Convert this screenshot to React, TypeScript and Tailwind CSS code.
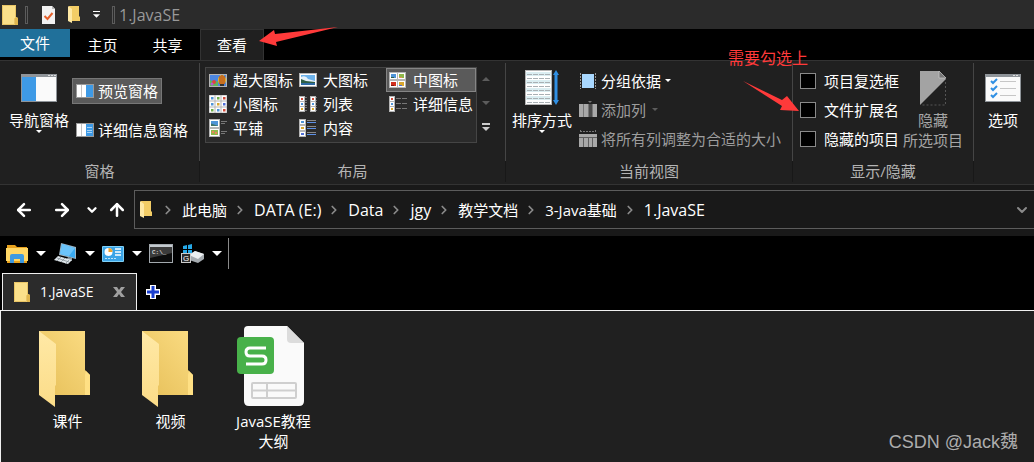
import type { ReactNode } from "react"
import { ArrowLeft, ArrowRight, ArrowUp, ChevronDown, ChevronRight } from "lucide-react"
import clsx from "clsx"

const crumbs = [
  { name: "此电脑" },
  { name: "DATA (E:)", latin: true },
  { name: "Data", latin: true },
  { name: "jgy", latin: true },
  { name: "教学文档" },
  { name: "3-Java基础" },
  { name: "1.JavaSE", latin: true },
]

const Caret = ({ className }: { className?: string }) => (
  <svg viewBox="0 0 8 4" className={clsx("shrink-0", className)} aria-hidden="true">
    <path d="M0 0h8L4 4z" fill="currentColor" />
  </svg>
)

const SmallFolder = ({ className }: { className?: string }) => (
  <svg viewBox="0 0 12 17" className={className} aria-hidden="true">
    <path d="M1 0h10v10l1 1v4H1z" fill="#f3cd66" />
    <path d="M0 0l4 3v14l-4-2z" fill="#ffe9a5" />
  </svg>
)

const ClosedFolder = ({ className }: { className?: string }) => (
  <svg viewBox="0 0 18 20" className={className} aria-hidden="true">
    <path d="M1 0h14v12l2 1v7H1z" fill="#fbe08a" />
    <path d="M15 12l-1 1v7h3v-7z" fill="#e0b64e" />
    <path d="M1.500 .5h13v12l-1 1v6h-12z" fill="none" stroke="#e9c566" />
  </svg>
)

/* Small landscape picture used by the layout icons */
const Photo = ({ x, y, w, h, tone = "#4f94d8" }: { x: number; y: number; w: number; h: number; tone?: string }) => (
  <g>
    <rect x={x + 0.5} y={y + 0.5} width={w - 1} height={h - 1} fill="#fff" stroke="#b5b5b5" />
    <rect x={x + 2} y={y + 2} width={w - 4} height={h - 4} fill={tone} />
    <path d={`M${x + 2} ${y + h / 2}l${w - 4} ${h / 4}V${y + h - 2}H${x + 2}z`} fill="#3d6b4f" opacity=".8" />
  </g>
)

const tones = ["#4f94d8", "#6fae4a", "#d24a3a", "#4f94d8", "#d9a72f", "#4f6fd8", "#6fae4a", "#4f94d8", "#d24a3a"]

const layoutIcons: Record<string, ReactNode> = {
  xl: (
    <g>
      <rect x=".5" y="3.500" width="17" height="12" fill="#4c86e0" stroke="#b5b5b5" />
      <path d="M1 9l4 2 4-1v5H1z" fill="#5db85a" />
      <circle cx="5" cy="11" r="2" fill="#e0463c" />
      <circle cx="3" cy="13" r="1.500" fill="#b75ad0" />
      <ellipse cx="13" cy="9" rx="4" ry="5" fill="#e8b720" />
      <path d="M11 5v8M13 4v10M15 5v8" stroke="#a8281f" />
      <path d="M11 14h4" stroke="#333" strokeWidth="2" />
    </g>
  ),
  large: (
    <g>
      <rect x=".5" y="2.500" width="17" height="13" fill="#fff" stroke="#b5b5b5" />
      <rect x="2" y="4" width="14" height="10" fill="#6db3ec" />
      <path d="M2 6q5-2 7 2l7 2v1H2z" fill="#e6f2fb" />
      <path d="M2 8l5 2 9 1v1H2z" fill="#2f5f46" />
      <path d="M2 12h14v2H2z" fill="#2f6ba5" />
    </g>
  ),
  medium: (
    <g>
      {[0, 1, 2, 3].map((i) => (
        <g key={i}>
          <rect x={(i % 2) * 8 + 0.5} y={Math.floor(i / 2) * 8 + 1.5} width="8" height="7" fill="#fff" stroke="#b5b5b5" />
          <rect x={(i % 2) * 8 + 2} y={Math.floor(i / 2) * 8 + 3} width="5" height="4" fill={["#4f94d8", "#8fb84a", "#d2301f", "#d9a72f"][i]} />
          <path d={`M${(i % 2) * 8 + 2} ${Math.floor(i / 2) * 8 + 6.5}h3`} stroke={["#2f5f46", "#e88a5a", "#7d1a10", "#4f6fd8"][i]} />
        </g>
      ))}
    </g>
  ),
  small: (
    <g>
      <rect width="18" height="18" fill="#b5b5b5" />
      {tones.map((tone, i) => (
        <g key={i}>
          <rect x={(i % 3) * 6 + 0.5} y={Math.floor(i / 3) * 6 + 0.5} width="5" height="5" fill="#fff" />
          <rect x={(i % 3) * 6 + 2} y={Math.floor(i / 3) * 6 + 2} width="2.500" height="2.500" fill={tone} />
        </g>
      ))}
    </g>
  ),
  list: (
    <g>
      {[0, 11].map((x) =>
        [0, 1, 2].map((i) => (
          <g key={`${x}-${i}`}>
            <rect x={x + 0.5} y={i * 5 + 1.5} width="5" height="5" fill="#fff" stroke="#b5b5b5" />
            <rect x={x + 2} y={i * 5 + 3} width="2" height="2" fill={tones[i + 2]} />
            <path d={`M${x + 6} ${i * 5 + 2.5}h2M${x + 6} ${i * 5 + 5.5}h2`} stroke="#777" />
          </g>
        ))
      )}
    </g>
  ),
  details: (
    <g>
      {[0, 1, 2].map((i) => (
        <g key={i}>
          <rect x=".5" y={i * 5 + 1.5} width="5" height="5" fill="#fff" stroke="#b5b5b5" />
          <rect x="2" y={i * 5 + 3} width="2" height="2" fill={tones[i + 2]} />
          <path d={`M7 ${i * 5 + 3.5}h5M13 ${i * 5 + 3.5}h5`} stroke="#777" />
        </g>
      ))}
    </g>
  ),
  tiles: (
    <g>
      <Photo x={0} y={0} w={11} h={9} />
      <rect x=".5" y="9.500" width="10" height="8" fill="#fff" stroke="#b5b5b5" />
      <rect x="2" y="11" width="7" height="5" fill="#8fb84a" />
      <path d="M3 13h2M6 14h2" stroke="#e88a5a" strokeWidth="2" />
      <path d="M12 2.500h6M12 4.500h4M12 12.500h6M12 14.500h4" stroke="#777" />
    </g>
  ),
  content: (
    <g>
      {[0, 1, 2].map((i) => (
        <g key={i}>
          <rect x=".5" y={i * 6 + 0.5} width="6" height="5" fill="#fff" stroke="#b5b5b5" />
          <rect x="2" y={i * 6 + 2} width="3" height="2" fill={tones[i + 3]} />
          <path d={`M8 ${i * 6 + 1.5}h9`} stroke="#888" />
          <path d={`M8 ${i * 6 + 3.5}h9`} stroke="#5c8fe6" />
        </g>
      ))}
    </g>
  ),
}

const layouts = [
  { id: "xl", label: "超大图标" },
  { id: "large", label: "大图标" },
  { id: "medium", label: "中图标" },
  { id: "small", label: "小图标" },
  { id: "list", label: "列表" },
  { id: "details", label: "详细信息" },
  { id: "tiles", label: "平铺" },
  { id: "content", label: "内容" },
]

const PaneIcon = ({ details }: { details?: boolean }) => (
  <svg viewBox="0 0 18 14" className="h-[14px] w-[18px] shrink-0" aria-hidden="true">
    <rect x=".5" y=".5" width="17" height="13" fill="#fff" stroke="#9a9a9a" />
    <path d="M5.500 1v12" stroke="#c4c4c4" />
    <rect x="10" y="1" width="7" height="12" fill="#3e9ae6" />
    {details && <path d="M11 4.500h5M11 7.500h5M11 9.500h5" stroke="#a8d4f8" />}
  </svg>
)

const Group = ({ label, className, children }: { label?: string; className: string; children: ReactNode }) => (
  <section className={clsx("flex flex-col pt-0.5", className)}>
    <div className="flex h-[98px] items-start border-r border-[#454545] pt-[3px]">{children}</div>
    <div className="h-[21px] border-r border-[#181818] text-center leading-5 text-[#b4b4b4]">{label}</div>
  </section>
)

interface BigButtonProps {
  icon: ReactNode
  lines: string[]
  caret?: boolean
  disabled?: boolean
}

const BigButton = ({ icon, lines, caret, disabled }: BigButtonProps) => (
  <button disabled={disabled} className={clsx("flex shrink-0 flex-col items-center", disabled && "text-[#a6a6a6]")}>
    <span className="flex h-[44px] items-center">{icon}</span>
    {lines.map((line) => (
      <span key={line} className="leading-5">{line}</span>
    ))}
    {caret && <Caret className="h-[3px] w-[6px]" />}
  </button>
)

const CheckRow = ({ id, label }: { id: string; label: string }) => (
  <div className="flex h-[29px] items-center gap-2">
    <input id={id} type="checkbox" className="size-4 shrink-0 appearance-none border border-[#8a8a8a] bg-black checked:bg-[#3e9ae6]" />
    <label htmlFor={id} className="whitespace-nowrap">{label}</label>
  </div>
)

const TitleBar = () => (
  <header className="flex h-[29px] items-center bg-[#2b2b2b] pl-px">
    <ClosedFolder className="h-5 w-[18px]" />
    <span className="ml-[6px] h-[18px] w-[3px] border border-[#5c5c5c]" />
    <button aria-label="属性" className="ml-[14px]">
      <svg viewBox="0 0 13 18" className="h-[18px] w-[13px]" aria-hidden="true">
        <path d="M0 0h10l3 3v15H0z" fill="#f2f2f2" />
        <path d="M10 0v3h3z" fill="#b9b9b9" />
        <path d="M2.500 10l3 3 5-6" fill="none" stroke="#e4602c" strokeWidth="2" />
      </svg>
    </button>
    <button aria-label="新建文件夹" className="ml-[13px]"><SmallFolder className="h-[17px] w-3" /></button>
    <button aria-label="自定义快速访问工具栏" className="ml-[13px] flex flex-col items-center gap-0.5 text-white">
      <span className="h-px w-[7px] bg-white" />
      <Caret className="h-1 w-[7px]" />
    </button>
    <span className="ml-3 h-[18px] w-[3px] border border-[#5c5c5c]" />
    <h1 className="ml-1 text-base leading-5 text-[#999]">1.JavaSE</h1>
  </header>
)

const RibbonTabs = () => (
  <nav className="flex h-[31px] bg-black">
    <button className="h-7 w-[70px] bg-[#20709a]">文件</button>
    <button className="w-[65px]">主页</button>
    <button className="w-[65px]">共享</button>
    <button className="w-16 border-x border-t border-[#333] bg-[#202020]">查看</button>
  </nav>
)

const Ribbon = () => (
  <div className="flex h-[125px] border-y border-[#333] bg-[#202020]">
    <Group label="窗格" className="w-[200px] shrink-0">
      <div className="flex gap-[3px] pl-[9px]">
        <BigButton
          lines={["导航窗格"]}
          caret
          icon={
            <svg viewBox="0 0 36 28" className="h-7 w-9" aria-hidden="true">
              <rect width="36" height="28" fill="#8f9499" />
              <rect x="1" y="3" width="34" height="24" fill="#fafafa" />
              <rect x="1" y="3" width="14" height="24" fill="#3e9ae6" />
              <path d="M27 1.500h2M30 1.500h2M33 1.500h2" stroke="#ddd" />
            </svg>
          }
        />
        <div className="flex flex-col items-start gap-[13px] pt-3">
          <button className="flex h-[26px] items-center gap-1 border border-[#777] bg-[#5a5a5a] px-[3px]"><PaneIcon />预览窗格</button>
          <button className="flex h-[26px] items-center gap-1 border border-transparent px-[3px]"><PaneIcon details />详细信息窗格</button>
        </div>
      </div>
    </Group>

    <Group label="布局" className="w-[306px] shrink-0">
      <div className="ml-[5px] mt-px flex">
        <div className="grid h-[76px] grid-cols-[90px_90px_90px] grid-rows-[24px_24px_24px] border border-[#454545] bg-[#2b2b2b]">
          {layouts.map(({ id, label }) => (
            <button
              key={id}
              className={clsx(
                "flex items-center gap-[6px] whitespace-nowrap border px-0.5",
                id === "medium" ? "border-[#858585] bg-[#5a5a5a]" : "border-transparent"
              )}
            >
              <svg viewBox="0 0 18 18" className="size-[18px] shrink-0" aria-hidden="true">{layoutIcons[id]}</svg>
              {label}
            </button>
          ))}
        </div>
        <div className="flex w-[18px] flex-col text-[#5c5c5c]">
          <button aria-label="向上" className="flex h-6 items-center justify-center"><Caret className="h-1 w-2 rotate-180" /></button>
          <button aria-label="向下" className="flex h-6 items-center justify-center"><Caret className="h-1 w-2" /></button>
          <button aria-label="更多" className="flex h-6 flex-col items-center justify-center gap-0.5 text-[#ccc]">
            <span className="h-0.5 w-2 bg-[#ccc]" />
            <Caret className="h-1 w-2" />
          </button>
        </div>
      </div>
    </Group>

    <Group label="当前视图" className="w-[287px] shrink-0">
      <div className="flex gap-[7px] pl-[6px]">
        <BigButton
          lines={["排序方式"]}
          caret
          icon={
            <svg viewBox="0 0 34 36" className="h-9 w-[34px]" aria-hidden="true">
              <rect x=".5" y=".5" width="26" height="34" fill="#fff" stroke="#b5b5b5" />
              {[2, 10, 18, 26].map((y) => (
                <rect key={y} x="1" y={y} width="25" height="4" fill="#dbeef2" />
              ))}
              <path
                d="M2 4.500h23M2 8.500h23M2 12.500h23M2 16.500h23M2 20.500h23M2 24.500h23M2 28.500h23M2 32.500h23"
                stroke="#a9b0b4"
                strokeDasharray="5 1"
              />
              <path d="M31 3v29" stroke="#2f8fe3" strokeWidth="3" />
              <path d="M28 5l3-5 3 5zM28 30l3 5 3-5z" fill="#2f8fe3" />
            </svg>
          }
        />
        <div className="flex flex-col items-start">
          <button className="flex h-[29px] items-center gap-1">
            <svg viewBox="0 0 18 18" className="size-[18px]" aria-hidden="true">
              <path d="M1.500 1v16M16.500 1v16" stroke="#999" strokeDasharray="2 1" />
              <rect x="3" y="2" width="12" height="14" fill="#a9d8ff" />
            </svg>
            分组依据<Caret className="h-[3px] w-[6px]" />
          </button>
          <button disabled className="flex h-[29px] items-center gap-1 text-[#9d9d9d]">
            <svg viewBox="0 0 18 18" className="size-[18px]" aria-hidden="true">
              <path d="M9 0h4l-2 2z" fill="#777" />
              <rect y="3" width="18" height="13" fill="#a8a8a8" />
              <rect x="9" y="3" width="4" height="13" fill="#4c4c4c" />
              <path d="M4.500 3v13M9.500 3v13M13.500 3v13" stroke="#777" />
            </svg>
            添加列<Caret className="ml-0.5 h-[3px] w-[6px] text-[#5c5c5c]" />
          </button>
          <button disabled className="flex h-[29px] items-center gap-1 whitespace-nowrap text-[#9d9d9d]">
            <svg viewBox="0 0 18 18" className="size-[18px]" aria-hidden="true">
              <path d="M1 1.500h16M1.500 0v3M16.500 0v3" stroke="#777" strokeDasharray="2 1" />
              <rect y="4" width="18" height="13" fill="#a8a8a8" />
              <path d="M0 7.500h18M4.500 8v9M9.500 8v9M13.500 8v9" stroke="#606060" />
            </svg>
            将所有列调整为合适的大小
          </button>
        </div>
      </div>
    </Group>

    <Group label="显示/隐藏" className="w-[181px] shrink-0">
      <div className="flex gap-1 pl-[7px]">
        <div className="flex flex-col">
          <CheckRow id="item-boxes" label="项目复选框" />
          <CheckRow id="file-ext" label="文件扩展名" />
          <CheckRow id="hidden-items" label="隐藏的项目" />
        </div>
        <BigButton
          disabled
          lines={["隐藏", "所选项目"]}
          icon={
            <svg viewBox="0 0 28 36" className="h-9 w-7" aria-hidden="true">
              <path d="M1 1h19l7 8L1 35z" fill="#a3a3a3" />
              <path d="M20 1v7h7z" fill="#777" stroke="#c8c8c8" strokeWidth=".7" />
              <path d="M26.500 12v23H3" fill="none" stroke="#555" strokeDasharray="2 2" />
            </svg>
          }
        />
      </div>
    </Group>

    <section className="flex flex-1 items-start pl-[11px] pt-[5px]">
      <BigButton
        lines={["选项"]}
        icon={
          <svg viewBox="0 0 36 28" className="h-7 w-9" aria-hidden="true">
            <rect width="36" height="28" fill="#8f9499" />
            <rect x="1" y="3" width="34" height="24" fill="#fafafa" />
            <path d="M28 1.500h2M31 1.500h2" stroke="#ddd" />
            <path d="M6 7l2 2 4-4M6 14l2 2 4-4M6 21l2 2 4-4" fill="none" stroke="#2f8fe3" strokeWidth="2" />
            <path d="M15 7.500h16M15 14.500h16M15 21.500h16" stroke="#c6c6c6" />
          </svg>
        }
      />
    </section>
  </div>
)

const AddressBar = () => (
  <div className="flex h-[51px] items-center bg-[#191919] pb-0.5 pl-[14px]">
    <button aria-label="后退"><ArrowLeft className="size-5" strokeWidth={3} /></button>
    <button aria-label="前进" className="ml-[18px]"><ArrowRight className="size-5" strokeWidth={3} /></button>
    <button aria-label="最近位置" className="ml-[13px]"><ChevronDown className="size-[14px]" strokeWidth={4} /></button>
    <button aria-label="向上" className="ml-2"><ArrowUp className="size-5" strokeWidth={3} /></button>
    <div className="ml-[7px] flex h-[39px] flex-1 items-center border-y border-l border-[#5c5c5c] pl-[5px]">
      <SmallFolder className="h-[17px] w-3" />
      <ol className="flex flex-1 items-center pl-[3px]">
        {crumbs.map(({ name, latin }) => (
          <li key={name} className="flex items-center">
            <ChevronRight className="ml-[6px] mr-[7px] size-[14px] text-[#8a8a8a]" strokeWidth={3} />
            <button className={clsx("whitespace-nowrap", latin && "text-base leading-5")}>{name}</button>
          </li>
        ))}
      </ol>
      <button aria-label="历史记录" className="mr-1 text-[#8a8a8a]"><ChevronDown className="size-4" strokeWidth={3} /></button>
    </div>
  </div>
)

const Toolbar = () => (
  <div className="flex h-[35px] items-center bg-black pl-[6px]">
    <button aria-label="文件夹" className="flex items-center gap-2">
      <svg viewBox="0 0 22 20" className="h-5 w-[22px]" aria-hidden="true">
        <path d="M1 1h8l2 2h10v16H1z" fill="#e9a21d" />
        <path d="M0 4h22v13H0z" fill="#ffd766" />
        <path d="M4 19v-7q0-2 2-2h10q2 0 2 2v7h-4v-4H8v4z" fill="#3f9ae0" />
      </svg>
      <Caret className="h-[5px] w-[10px]" />
    </button>
    <button aria-label="此电脑" className="ml-2 flex items-center gap-2">
      <svg viewBox="0 0 23 22" className="h-[22px] w-[23px]" aria-hidden="true">
        <path d="M7 0l15 4v12L5 12z" fill="#9fb4c2" />
        <path d="M8 1l13 4v10L6 11z" fill="#39aaf2" />
        <path d="M8 1l13 4-6 8-9-2z" fill="#6cc4fa" />
        <path d="M14 14l4 1v3l-5-2z" fill="#8b979e" />
        <path d="M4 13l14 4-4 4-14-4z" fill="#dfe6ea" />
        <path d="M3 15l12 4M7 14l-4 4M11 15l-4 4M15 17l-4 4" stroke="#7d8890" strokeWidth=".7" />
      </svg>
      <Caret className="h-[5px] w-[10px]" />
    </button>
    <button aria-label="控制面板" className="ml-[7px] flex items-center gap-2">
      <svg viewBox="0 0 22 16" className="h-4 w-[22px]" aria-hidden="true">
        <rect width="22" height="16" rx="1" fill="#7fd0f7" />
        <rect x="1" y="1" width="20" height="14" fill="#3ba4e6" />
        <circle cx="6.500" cy="6" r="4" fill="#fff" />
        <path d="M6.500 6V2a4 4 0 0 1 4 4z" fill="#f0a229" />
        <path d="M13 3h6M13 6h6M13 9h6" stroke="#fff" strokeWidth="1.500" />
        <path d="M3 12.500h12" stroke="#bfe6fa" strokeDasharray="2 1" />
      </svg>
      <Caret className="h-[5px] w-[10px]" />
    </button>
    <button aria-label="命令提示符" className="ml-[7px]">
      <svg viewBox="0 0 24 19" className="h-[19px] w-6" aria-hidden="true">
        <rect x=".5" y=".5" width="23" height="18" fill="#0c0c0c" stroke="#a3a9ae" />
        <path d="M1 1h22v2H1z" fill="#c3c9ce" />
        <path d="M1 3h22v6L1 14z" fill="#3b3b3b" />
        <text x="3" y="10" fontSize="6" fontFamily="Liberation Mono, monospace" fill="#fff">C:\_</text>
      </svg>
    </button>
    <button aria-label="磁盘" className="ml-2 flex items-center gap-2">
      <svg viewBox="0 0 23 20" className="h-5 w-[23px]" aria-hidden="true">
        <path d="M2 2l4-1v4H2zM7 1l4-1v5H7zM2 6h4v4l-4-1zM7 6h4v4H7z" fill="#26a9e8" />
        <path d="M8 11l6-4 9 3v5l-6 4-9-3z" fill="#a5abb0" />
        <path d="M8 11l6-4 9 3-6 5z" fill="#eceff1" />
        <rect x=".5" y="9.500" width="9" height="9" fill="#2b2b2b" stroke="#ccc" />
        <text x="2" y="17" fontSize="8" fontFamily="Liberation Sans, sans-serif" fill="#fff">G</text>
      </svg>
      <Caret className="h-[5px] w-[10px]" />
    </button>
    <span className="ml-[6px] h-[31px] w-px bg-[#8a8a8a]" />
  </div>
)

const FolderTabs = () => (
  <div className="flex h-[39px] items-end border-b border-[#f0f0f0] bg-black pl-0.5">
    <div className="flex h-[37px] w-[135px] items-center border-x border-t border-[#f0f0f0] bg-[#2b2b2b] pl-[10px]">
      <ClosedFolder className="h-5 w-[18px]" />
      <button className="ml-[9px] text-sm leading-5">1.JavaSE</button>
      <button aria-label="关闭" className="ml-auto mr-[11px]">
        <svg viewBox="0 0 12 10" className="h-[10px] w-3" aria-hidden="true">
          <path d="M0 0h4l2 3 2-3h4L8 5l4 5H8L6 7l-2 3H0l4-5z" fill="#a0a0a0" />
        </svg>
      </button>
    </div>
    <button aria-label="新标签" className="mb-[10px] ml-2">
      <svg viewBox="0 0 16 16" className="size-4" aria-hidden="true">
        <path d="M5 1h6v4h4v6h-4v4H5v-4H1V5h4z" fill="#fff" />
        <path d="M8 2v12M2 8h12" stroke="#1a3fd0" strokeWidth="3" />
      </svg>
    </button>
  </div>
)

const FolderArt = () => (
  <svg viewBox="0 0 80 84" className="h-[84px] w-20" aria-hidden="true">
    <defs>
      <linearGradient id="folder-back" x1="0" y1="1" x2="1" y2="0">
        <stop offset="0" stopColor="#e6bf58" />
        <stop offset="1" stopColor="#fbdc83" />
      </linearGradient>
      <linearGradient id="folder-front" x1="0" y1="0" x2="0" y2="1">
        <stop offset="0" stopColor="#ffe9a6" />
        <stop offset="1" stopColor="#fbdc88" />
      </linearGradient>
    </defs>
    <path d="M11 7h46v39l5 5v20H11z" fill="url(#folder-back)" />
    <path d="M58 47l4 4v20h-5V51z" fill="#ffe084" />
    <path d="M11 7l17 13v41l-1 1v21L11 71z" fill="url(#folder-front)" />
  </svg>
)

const SheetArt = () => (
  <svg viewBox="0 0 80 84" className="h-[84px] w-20" aria-hidden="true">
    <path d="M14 2h39l17 17v58q0 5-5 5H15q-5 0-5-5V6q0-4 4-4z" fill="#fafafa" />
    <path d="M53 2l17 17H57q-4 0-4-4z" fill="#dcdcdc" />
    <rect x="3" y="13" width="37" height="37" rx="4" fill="#48b14a" />
    <path d="M32 24H16q-4 0-4 4t4 4h12q4 0 4 4t-4 4H12" fill="none" stroke="#fff" strokeWidth="3" />
    <g fill="none" stroke="#cfcfcf" strokeWidth="2">
      <rect x="18" y="59" width="44" height="15" rx="1" />
      <path d="M18 66.500h44M33 59v15" />
    </g>
  </svg>
)

const files = [
  { name: "课件", art: <FolderArt /> },
  { name: "视频", art: <FolderArt /> },
  { name: "JavaSE教程大纲", art: <SheetArt /> },
]

export default function App() {
  return (
    <div className="relative flex min-h-screen flex-col overflow-hidden bg-[#202020] font-['Open_Sans','Noto_Sans_CJK_SC',sans-serif] text-[15px] leading-5 text-white">
      <TitleBar />
      <RibbonTabs />
      <Ribbon />
      <AddressBar />
      <Toolbar />
      <div className="h-px bg-black" />
      <FolderTabs />

      <main className="flex-1 border-l border-[#f0f0f0] pl-[15px] pt-[13px]">
        <ul className="flex flex-wrap">
          {files.map(({ name, art }) => (
            <li key={name} className="w-[103px]">
              <button className="flex w-full flex-col items-center gap-[3px] px-3">
                {art}
                <span className="leading-5">{name}</span>
              </button>
            </li>
          ))}
        </ul>
      </main>

      {/* Annotations drawn over the window */}
      <svg viewBox="0 0 79 20" className="pointer-events-none absolute left-[259px] top-[27px] h-5 w-[79px]" aria-hidden="true">
        <path d="M0 14L15 3l1 4L79 0 17 15l1 4z" fill="#ff3a3a" />
      </svg>
      <svg viewBox="0 0 56 31" className="pointer-events-none absolute left-[743px] top-[81px] h-[31px] w-14" aria-hidden="true">
        <path d="M0 0l39 19 5-4 12 15-19-1 2-4z" fill="#ff3a3a" />
      </svg>
      <p className="absolute left-[728px] top-12 text-base leading-5 text-[#ff3a3a]">需要勾选上</p>
      <p className="absolute bottom-2 right-4 font-['Liberation_Sans','Noto_Sans_CJK_SC',sans-serif] text-lg leading-6 text-[#adadad] text-shadow-2xs">CSDN @Jack魏</p>
    </div>
  )
}
